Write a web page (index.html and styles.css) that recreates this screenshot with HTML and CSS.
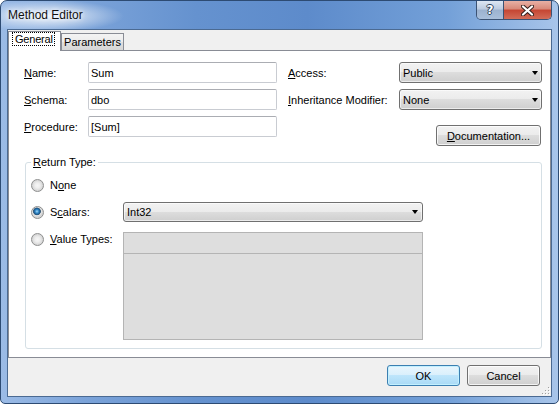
FILE: index.html
```html
<!DOCTYPE html>
<html>
<head>
<meta charset="utf-8">
<title>Method Editor</title>
<link rel="stylesheet" href="styles.css">
</head>
<body>
<div class="window">
  <div class="titlebar">
    <span class="title">Method Editor</span>
    <div class="caption">
      <div class="cbtn help">?</div>
      <div class="cbtn close">
        <svg width="13" height="11" viewBox="0 0 13 11">
          <path d="M2 1.5 L11 9.5 M11 1.5 L2 9.5" stroke="#3a2320" stroke-width="4.2" stroke-linecap="round"/>
          <path d="M2 1.5 L11 9.5 M11 1.5 L2 9.5" stroke="#ffffff" stroke-width="2.2" stroke-linecap="round"/>
        </svg>
      </div>
    </div>
  </div>
  <div class="client">
    <div class="tabs">
      <div class="tab active"><span class="focus">General</span></div>
      <div class="tab">Parameters</div>
    </div>
    <div class="pane">
      <div class="top">
        <div class="fields left">
          <label><u>N</u>ame:</label><div class="textbox">Sum</div>
          <label><u>S</u>chema:</label><div class="textbox">dbo</div>
          <label><u>P</u>rocedure:</label><div class="textbox">[Sum]</div>
        </div>
        <div class="right">
          <div class="fields rgt">
            <label><u>A</u>ccess:</label><div class="combo">Public<i class="arrow"></i></div>
            <label><u>I</u>nheritance Modifier:</label><div class="combo">None<i class="arrow"></i></div>
          </div>
          <button class="btn doc"><u>D</u>ocumentation...</button>
        </div>
      </div>
      <fieldset class="group">
        <legend><u>R</u>eturn Type:</legend>
        <div class="opts">
          <div class="opt"><span class="radio"></span><span>N<u>o</u>ne</span></div>
          <div></div>
          <div class="opt"><span class="radio checked"></span><span>S<u>c</u>alars:</span></div>
          <div class="combo int">Int32<i class="arrow"></i></div>
          <div class="opt first"><span class="radio"></span><span><u>V</u>alue Types:</span></div>
          <div class="list"><div class="list-head"></div></div>
        </div>
      </fieldset>
    </div>
    <div class="footer">
      <button class="btn default">OK</button>
      <button class="btn cancel">Cancel</button>
      <svg class="grip" width="8" height="8" viewBox="0 0 8 8">
        <g fill="#ffffff">
          <rect x="7" y="1" width="1" height="1"/><rect x="4" y="4" width="1" height="1"/><rect x="7" y="4" width="1" height="1"/>
          <rect x="1" y="7" width="1" height="1"/><rect x="4" y="7" width="1" height="1"/><rect x="7" y="7" width="1" height="1"/>
        </g>
        <g fill="#a0a0a0">
          <rect x="6" y="0" width="1" height="1"/><rect x="3" y="3" width="1" height="1"/><rect x="6" y="3" width="1" height="1"/>
          <rect x="0" y="6" width="1" height="1"/><rect x="3" y="6" width="1" height="1"/><rect x="6" y="6" width="1" height="1"/>
        </g>
      </svg>
    </div>
  </div>
</div>
</body>
</html>
```

FILE: styles.css
```css
* { box-sizing: border-box; }
html, body { margin: 0; padding: 0; }
body {
  width: 559px;
  height: 404px;
  overflow: hidden;
  background: #ffffff;
  font-family: "Liberation Sans", Arial, sans-serif;
  font-size: 11px;
  color: #000;
}
u { text-decoration: underline; text-underline-offset: 1px; }

.window {
  width: 559px;
  height: 404px;
  border: 1px solid #2d4b73;
  border-radius: 7px 7px 5px 5px;
  padding: 0 6px 6px;
  display: flex;
  flex-direction: column;
  background:
    radial-gradient(ellipse 75px 16px at 48px 15px, rgba(255,255,255,0.85), rgba(255,255,255,0) 100%),
    linear-gradient(to right, #9bbbe6 0%, #7ba3d9 15%, #6592cf 35%, #5d8bcb 55%, #73a0d8 80%, #a8c5ea 100%);
}

.titlebar {
  height: 28px;
  display: flex;
  align-items: flex-start;
}
.title {
  padding: 7px 0 0 1px;
  font-size: 12px;
  line-height: 15px;
  color: #111;
  text-shadow: 0 0 4px #fff, 0 0 8px rgba(255,255,255,0.9);
}
.caption {
  margin-left: auto;
  display: flex;
  height: 19px;
  border: 1px solid #3b5273;
  border-top: 0;
  border-radius: 0 0 5px 5px;
  overflow: hidden;
}
.cbtn {
  height: 100%;
  display: flex;
  align-items: center;
  justify-content: center;
}
.help {
  width: 27px;
  border-right: 1px solid #3b5273;
  background: linear-gradient(#dde7f3, #bccbe0 45%, #9cb2cf 50%, #a9bfdb);
  color: #fff;
  font-family: "DejaVu Sans", sans-serif;
  font-weight: bold;
  font-size: 12px;
  text-shadow: 1px 0 #2e3f58, -1px 0 #2e3f58, 0 1px #2e3f58, 0 -1px #2e3f58;
}
.close {
  width: 47px;
  background: linear-gradient(#e8b0a5, #d88878 45%, #c54532 50%, #d26c58);
}

.client {
  flex: 1;
  border: 1px solid #4b6a92;
  background: #f0f0f0;
  display: flex;
  flex-direction: column;
}

.tabs {
  height: 20px;
  display: flex;
  align-items: flex-end;
}
.tab {
  height: 17px;
  width: 63px;
  border: 1px solid #898c95;
  border-bottom: 0;
  background: linear-gradient(#f3f3f3, #ececec 50%, #e0e0e0 50%, #d6d6d6);
  display: flex;
  align-items: center;
  justify-content: center;
}
.tab.active {
  width: 53px;
  height: 20px;
  margin-bottom: -1px;
  background: #ffffff;
  position: relative;
  z-index: 1;
  align-items: flex-start;
  justify-content: flex-start;
  padding-left: 3px;
}
.focus {
  height: 14px;
  line-height: 12px;
  border: 1px dotted #000;
  padding: 0 1px 0 2px;
  letter-spacing: -0.2px;
}

.pane {
  flex: 1;
  background: #fff;
  border: 1px solid #898c95;
  padding: 11px 0 0 15px;
}

.top {
  display: flex;
  align-items: flex-start;
}
.fields {
  display: grid;
  grid-auto-rows: 21px;
  row-gap: 6px;
  align-items: center;
}
.fields.left { grid-template-columns: 64px 189px; }
.right {
  margin-left: 11px;
  display: flex;
  flex-direction: column;
}
.fields.rgt { grid-template-columns: 111px 143px; }

.textbox {
  height: 21px;
  border: 1px solid #c9ccd2;
  border-top-color: #abadb3;
  border-radius: 2px;
  padding-left: 2px;
  display: flex;
  align-items: center;
  background: #fff;
}

.combo {
  height: 21px;
  border: 1px solid #707070;
  border-radius: 3px;
  background: linear-gradient(#f2f2f2, #ebebeb 50%, #dddddd 50%, #cfcfcf);
  box-shadow: inset 0 0 0 1px rgba(255,255,255,0.6);
  display: flex;
  align-items: center;
  padding-left: 3px;
}
.combo.int { height: 20px; }
.arrow {
  margin-left: auto;
  margin-right: 3px;
  width: 1px;
  height: 0;
  border-left: 3px solid transparent;
  border-right: 3px solid transparent;
  border-top: 4px solid #000;
}
.combo.int .arrow { margin-right: 4px; }

.btn {
  font: inherit;
  color: #000;
  height: 21px;
  width: 73px;
  padding: 0;
  border: 1px solid #707070;
  border-radius: 3px;
  background: linear-gradient(#f2f2f2, #ebebeb 50%, #dddddd 50%, #cfcfcf);
  box-shadow: inset 0 0 0 1px rgba(255,255,255,0.75);
}
.btn.doc {
  align-self: flex-end;
  width: 105px;
  margin: 15px 1px 0 0;
}
.btn.default {
  border-color: #3c7fb1;
  background: linear-gradient(#eaf6fd, #d9effc 50%, #bee5fb 50%, #a9daf6);
  box-shadow: inset 0 0 0 1px #c2f0ff;
}
.btn.cancel { margin-left: 7px; }

.group {
  margin: 10px 0 0 1px;
  width: 517px;
  min-width: 0;
  border: 1px solid #d5dfe5;
  border-radius: 3px;
  padding: 10px 0 8px 5px;
}
.group legend {
  margin-left: 0;
  padding: 0 2px;
  line-height: 13px;
}
.opts {
  display: grid;
  grid-template-columns: 92px 300px;
  row-gap: 10px;
  align-items: center;
}
.opt {
  display: flex;
  align-items: center;
  gap: 6px;
  line-height: 13px;
}
.opt.first {
  align-self: start;
  margin-top: 1px;
}
.radio {
  width: 13px;
  height: 13px;
  border-radius: 50%;
  border: 1px solid #8e8f8f;
  background: radial-gradient(circle at 50% 50%, #f6f6f6 0, #eeeeee 2.5px, #d4d4d4 5.5px);
  flex: none;
}
.radio.checked {
  background: radial-gradient(circle at 45% 40%, #a6dcf7 0, #3a8fcd 1.6px, #1a5b92 3px, #40607a 3.6px, #e8e8e8 4.2px, #d4d4d4 5.5px);
}
.list {
  height: 108px;
  border: 1px solid #b4b4b4;
  background: #dedede;
}
.list-head {
  height: 21px;
  border-bottom: 1px solid #b4b4b4;
}

.footer {
  height: 38px;
  display: flex;
  justify-content: flex-end;
  align-items: flex-start;
  padding: 7px 1px 0 0;
}
.grip {
  align-self: flex-end;
  margin: 0 0 1px 2px;
}
```
